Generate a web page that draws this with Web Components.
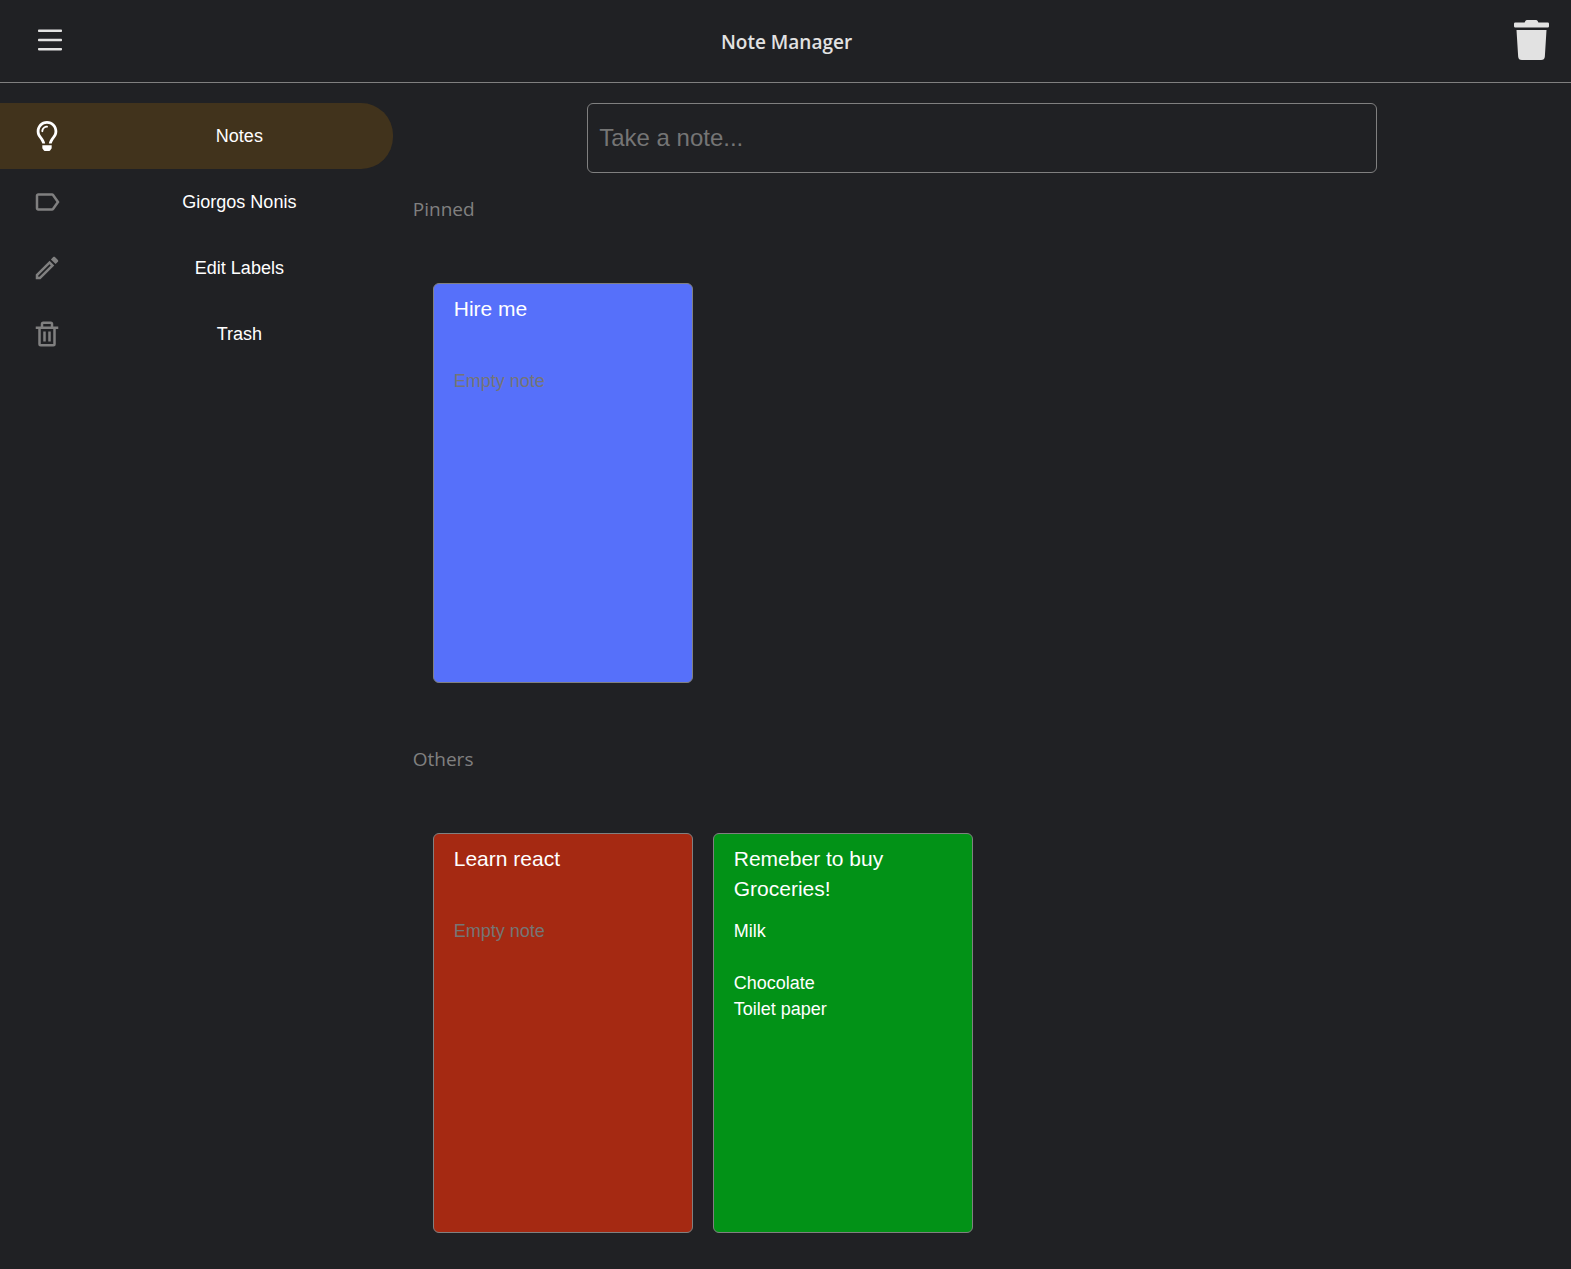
<!DOCTYPE html>
<html lang="en">
<head>
<meta charset="utf-8">
<meta name="viewport" content="width=device-width, initial-scale=1">
<title>Note Manager</title>
<style>
  :root {
    --bg: #202124;
    --line: #808080;
    --muted: #808080;
    --hint: #757575;
    --soft: #e2e2e2;
    --active: #41331c;
    --ui: "Segoe UI", "Open Sans", "Noto Sans", sans-serif;
    --text: Arial, "Liberation Sans", sans-serif;
  }
  body { margin: 0; background: var(--bg); color: #fff; font-family: var(--text); }
</style>
</head>
<body>
<note-app>
  <app-header slot="header">Note Manager</app-header>
  <side-nav slot="nav">
    <nav-item icon="bulb" active>Notes</nav-item>
    <nav-item icon="label">Giorgos Nonis</nav-item>
    <nav-item icon="pencil">Edit Labels</nav-item>
    <nav-item icon="bin">Trash</nav-item>
  </side-nav>
  <note-composer></note-composer>
  <note-section heading="Pinned">
    <note-card heading="Hire me" style="--card: #5670fa"></note-card>
  </note-section>
  <note-section heading="Others">
    <note-card heading="Learn react" style="--card: #a52912"></note-card>
    <note-card heading="Remeber to buy Groceries!" style="--card: #029217">Milk

Chocolate
Toilet paper</note-card>
  </note-section>
</note-app>

<script>
  const icons = {
    bulb: '<svg viewBox="0 0 352 512" aria-hidden="true"><path d="M176 80c-52.94 0-96 43.06-96 96 0 8.84 7.16 16 16 16s16-7.16 16-16c0-35.3 28.72-64 64-64 8.84 0 16-7.16 16-16s-7.16-16-16-16zM96.06 459.17c0 3.15.93 6.22 2.68 8.84l24.51 36.84c2.97 4.46 7.97 7.14 13.32 7.14h78.85c5.36 0 10.36-2.68 13.32-7.14l24.51-36.84c1.74-2.62 2.67-5.7 2.68-8.84l.05-43.18H96.02l.04 43.18zM176 0C73.72 0 0 82.97 0 176c0 44.37 16.45 84.85 43.56 115.78 16.64 18.99 42.74 58.8 52.42 92.16v.06h48v-.12c-.01-4.77-.72-9.51-2.15-14.07-5.59-17.81-22.82-64.77-62.17-109.67-20.54-23.43-31.52-53.15-31.61-84.14-.2-73.64 59.67-128 127.95-128 70.58 0 128 57.42 128 128 0 30.97-11.24 60.85-31.65 84.14-39.11 44.61-56.42 91.47-62.1 109.46a47.507 47.507 0 0 0-2.22 14.3v.1h48v-.05c9.68-33.37 35.78-73.18 52.42-92.16C335.55 260.85 352 220.37 352 176 352 78.8 273.2 0 176 0z"/></svg>',
    label: '<svg viewBox="0 0 24 24" aria-hidden="true"><path d="M17.63 5.84C17.27 5.33 16.67 5 16 5L5 5.01C3.9 5.01 3 5.9 3 7v10c0 1.1.9 1.99 2 1.99L16 19c.67 0 1.27-.33 1.63-.84L22 12l-4.37-6.16zM16 17H5V7h11l3.55 5L16 17z"/></svg>',
    pencil: '<svg viewBox="0 0 24 24" aria-hidden="true"><path d="M14.06 9.02l.92.92L5.92 19H5v-.92l9.06-9.06M17.66 3c-.25 0-.51.1-.7.29l-1.83 1.83 3.75 3.75 1.83-1.83a.996.996 0 0 0 0-1.41l-2.34-2.34c-.2-.2-.45-.29-.71-.29zm-3.6 3.19L3 17.25V21h3.75L17.81 9.94l-3.75-3.75z"/></svg>',
    bin: '<svg viewBox="0 0 24 24" aria-hidden="true"><path d="M5 20a2 2 0 0 0 2 2h10a2 2 0 0 0 2-2V8h2V6h-4V4a2 2 0 0 0-2-2H9a2 2 0 0 0-2 2v2H3v2h2zM9 4h6v2H9zM8 8h9v12H7V8z"/><path d="M9 10h2v8H9zm4 0h2v8h-2z"/></svg>'
  };

  const define = (name, render, setup) => customElements.define(name, class extends HTMLElement {
    connectedCallback() {
      if (this.shadowRoot) return;
      const root = this.attachShadow({ mode: 'open' });
      root.innerHTML = '<style>*{box-sizing:border-box}</style>' + render(this);
      if (setup) setup(this, root);
    }
  });

  define('note-app', () => `
    <style>
      :host { display: block; min-height: 100vh; }
      .body { display: flex; align-items: flex-start; padding: 20px 0; }
      .nav { flex: 0 0 25%; }
      main { flex: 1; min-width: 0; }
    </style>
    <slot name="header"></slot>
    <div class="body">
      <div class="nav"><slot name="nav"></slot></div>
      <main><slot></slot></main>
    </div>`);

  define('app-header', () => `
    <style>
      :host { display: block; border-bottom: 1px solid var(--line); color: var(--soft); }
      header { display: flex; align-items: flex-start; padding: 20px 20px 18px 38px; }
      button { display: grid; place-items: center; height: 40px; padding: 0; border: 0; background: none; color: inherit; cursor: pointer; }
      .menu { width: 24px; }
      .empty { width: 40px; }
      svg { display: block; fill: currentColor; }
      h1 { flex: 1; margin: 0; font: 600 19px/44px var(--ui); text-align: center; }
    </style>
    <header>
      <button class="menu" type="button" aria-label="Menu">
        <svg width="24" height="22" viewBox="0 0 24 22" aria-hidden="true">
          <rect y=".6" width="24" height="2.4" rx=".8"/><rect y="9.8" width="24" height="2.4" rx=".8"/><rect y="19" width="24" height="2.4" rx=".8"/>
        </svg>
      </button>
      <h1><slot></slot></h1>
      <button class="empty" type="button" aria-label="Delete notes">
        <svg width="35" height="40" viewBox="0 0 448 512" aria-hidden="true"><path d="M432 32H312l-9.4-18.7A24 24 0 0 0 281.1 0H166.8a23.72 23.72 0 0 0-21.4 13.3L136 32H16A16 16 0 0 0 0 48v32a16 16 0 0 0 16 16h416a16 16 0 0 0 16-16V48a16 16 0 0 0-16-16zM53.2 467a48 48 0 0 0 47.9 45h245.8a48 48 0 0 0 47.9-45L416 128H32z"/></svg>
      </button>
    </header>`);

  define('side-nav', () => `
    <style>
      :host { display: block; }
      nav { display: flex; flex-direction: column; }
    </style>
    <nav aria-label="Main"><slot></slot></nav>`);

  define('nav-item', el => `
    <style>
      :host { display: block; }
      a { display: flex; align-items: center; gap: 24px; height: 66px; padding-left: 32px;
          border-radius: 0 32px 32px 0; color: #fff; text-decoration: none; font: 18px/26px var(--text); }
      svg { flex: none; width: 30px; height: 30px; fill: var(--muted); }
      span { flex: 1; text-align: center; }
      :host([active]) a { background: var(--active); }
      :host([active]) svg { fill: #fff; }
    </style>
    <a href="#"${el.hasAttribute('active') ? ' aria-current="page"' : ''}>${icons[el.getAttribute('icon')]}<span><slot></slot></span></a>`);

  define('note-composer', () => `
    <style>
      :host { display: block; }
      input { display: block; width: 67%; height: 70px; margin: 0 auto; padding: 0 11px; border: 1px solid var(--line);
              border-radius: 6px; outline: 0; background: transparent; color: #fff; font: 24px var(--text); }
      input::placeholder { color: var(--hint); opacity: 1; }
    </style>
    <input type="text" placeholder="Take a note..." aria-label="Take a note">`);

  define('note-section', el => `
    <style>
      :host { display: block; padding: 20px 20px 40px; }
      h2 { margin: 0; color: var(--muted); font: 400 19px/32px var(--ui); }
      .cards { display: flex; flex-wrap: wrap; gap: 20px; padding: 58px 20px 0; }
      :host(:last-of-type) { padding-bottom: 0; }
    </style>
    <section>
      <h2></h2>
      <div class="cards"><slot></slot></div>
    </section>`, (el, root) => {
      root.querySelector('h2').textContent = el.getAttribute('heading');
    });

  define('note-card', () => `
    <style>
      :host { display: block; }
      article { width: 260px; height: 400px; padding: 10px 20px; border: 1px solid var(--line);
                border-radius: 6px; background: var(--card); overflow: hidden; }
      h3 { min-height: 60px; margin: 0 0 14px; color: #fff; font: 400 21px/30px var(--text); }
      p { margin: 0; color: #fff; font: 18px/26px var(--text); white-space: pre-line; }
      .empty { color: var(--hint); }
    </style>
    <article>
      <h3></h3>
      <p><slot><span class="empty">Empty note</span></slot></p>
    </article>`, (el, root) => {
      root.querySelector('h3').textContent = el.getAttribute('heading');
    });
</script>
</body>
</html>
